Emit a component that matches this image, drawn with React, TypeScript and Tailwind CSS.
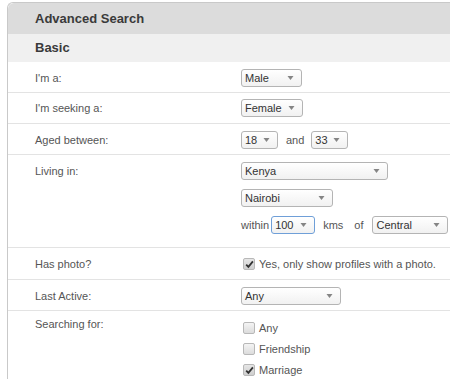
import React from "react";

function Select({ value, w, focused }: { value: string; w: string; focused?: boolean }) {
  return (
    <div
      className={`relative h-[18px] ${w} rounded-[3px] border ${
        focused ? "border-[#6f9fd8]" : "border-[#b4b4b4]"
      } bg-gradient-to-b from-white to-[#f1f1f1] pl-[3px] text-[11px] leading-[16px] text-[#333]`}
    >
      {value}
      <svg
        className="absolute right-[7px] top-[6px]"
        width="7"
        height="4"
        viewBox="0 0 7 4"
      >
        <polygon points="0.5,0 6.5,0 3.5,4" fill="#858585" />
      </svg>
    </div>
  );
}

function Check({ checked, label }: { checked?: boolean; label: string }) {
  return (
    <div className="flex h-[18px] items-center">
      <div
        className={`relative ml-[2px] h-[12px] w-[12px] rounded-[2px] border border-[#b8b8b8] bg-gradient-to-b ${
          checked ? "from-[#e6e6e6] to-[#cfcfcf]" : "from-[#f4f4f4] to-[#dcdcdc]"
        }`}
      >
        {checked && (
          <svg className="absolute left-[0px] top-[0px]" width="11" height="11" viewBox="0 0 11 11">
            <path d="M2.2 5.6 L4.4 7.9 L8.9 2.4" stroke="#333" strokeWidth="1.8" fill="none" />
          </svg>
        )}
      </div>
      <span className="ml-[4px] text-[11px] text-[#555]">{label}</span>
    </div>
  );
}

function Row({
  label,
  children,
  cls,
}: {
  label: string;
  children: React.ReactNode;
  cls: string;
}) {
  return (
    <div className={`flex items-start border-b border-[#e3e3e3] ${cls}`}>
      <div className="w-[233px] shrink-0 pl-[27px] text-[11px] leading-[18px] text-[#555]">
        {label}
      </div>
      <div className="flex flex-col">{children}</div>
    </div>
  );
}

export default function App() {
  return (
    <div
      className="h-[384px] w-[450px] overflow-hidden bg-white pl-[7px] pt-[2px]"
      style={{ fontFamily: '"Liberation Sans", Arial, sans-serif' }}
    >
      <div className="rounded-tl-[6px] border-l border-t border-[#c9c9c9] bg-white">
        <div className="flex h-[31px] items-center rounded-tl-[6px] bg-[#dcdcdc] pl-[27px] text-[13px] font-bold text-[#3a3a3a]">
          Advanced Search
        </div>
        <div className="flex h-[28px] items-center bg-[#f0f0f0] pl-[27px] text-[13px] font-bold text-[#3a3a3a]">
          Basic
        </div>
        <Row label="I'm a:" cls="pt-[7px] pb-[5px]">
          <Select value="Male" w="w-[61px]" />
        </Row>
        <Row label="I'm seeking a:" cls="pt-[6px] pb-[6px]">
          <Select value="Female" w="w-[62px]" />
        </Row>
        <Row label="Aged between:" cls="pt-[7px] pb-[5px]">
          <div className="flex items-center">
            <Select value="18" w="w-[37px]" />
            <span className="ml-[8px] mr-[7px] text-[11px] text-[#555]">and</span>
            <Select value="33" w="w-[37px]" />
          </div>
        </Row>
        <Row label="Living in:" cls="pt-[7px] pb-[13px]">
          <div className="flex flex-col gap-[9px]">
            <Select value="Kenya" w="w-[147px]" />
            <Select value="Nairobi" w="w-[92px]" />
            <div className="flex items-center">
              <span className="text-[11px] text-[#555]">within</span>
              <div className="ml-[2px]">
                <Select value="100" w="w-[44px]" focused />
              </div>
              <span className="ml-[8px] text-[11px] text-[#555]">kms</span>
              <span className="ml-[11px] text-[11px] text-[#555]">of</span>
              <div className="ml-[9px]">
                <Select value="Central" w="w-[76px]" />
              </div>
            </div>
          </div>
        </Row>
        <Row label="Has photo?" cls="pt-[7px] pb-[6px]">
          <Check checked label="Yes, only show profiles with a photo." />
        </Row>
        <Row label="Last Active:" cls="pt-[7px] pb-[5px]">
          <Select value="Any" w="w-[100px]" />
        </Row>
        <div className="flex items-start pt-[4px]">
          <div className="w-[233px] shrink-0 pl-[27px] text-[11px] leading-[18px] text-[#555]">
            Searching for:
          </div>
          <div className="flex flex-col gap-[3px] pt-[4px]">
            <Check label="Any" />
            <Check label="Friendship" />
            <Check checked label="Marriage" />
          </div>
        </div>
      </div>
    </div>
  );
}
